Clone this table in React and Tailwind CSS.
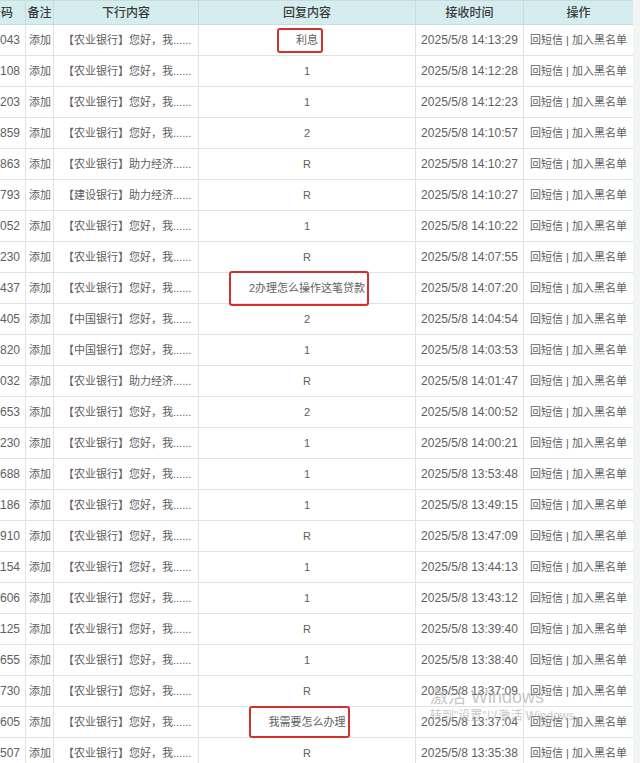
const rows = [
  ["1391043", "农业", "您好，我", "利息", "14:13:29"],
  ["1382108", "农业", "您好，我", "1", "14:12:28"],
  ["1375203", "农业", "您好，我", "1", "14:12:23"],
  ["1366859", "农业", "您好，我", "2", "14:10:57"],
  ["1358863", "农业", "助力经济", "R", "14:10:27"],
  ["1397793", "建设", "助力经济", "R", "14:10:27"],
  ["1380052", "农业", "您好，我", "1", "14:10:22"],
  ["1352230", "农业", "您好，我", "R", "14:07:55"],
  ["1384437", "农业", "您好，我", "2办理怎么操作这笔贷款", "14:07:20"],
  ["1371405", "中国", "您好，我", "2", "14:04:54"],
  ["1596820", "中国", "您好，我", "1", "14:03:53"],
  ["1580032", "农业", "助力经济", "R", "14:01:47"],
  ["1367653", "农业", "您好，我", "2", "14:00:52"],
  ["1352230", "农业", "您好，我", "1", "14:00:21"],
  ["1326688", "农业", "您好，我", "1", "13:53:48"],
  ["1381186", "农业", "您好，我", "1", "13:49:15"],
  ["1359910", "农业", "您好，我", "R", "13:47:09"],
  ["1381154", "农业", "您好，我", "1", "13:44:13"],
  ["1376606", "农业", "您好，我", "1", "13:43:12"],
  ["1391125", "农业", "您好，我", "R", "13:39:40"],
  ["1356655", "农业", "您好，我", "1", "13:38:40"],
  ["1387730", "农业", "您好，我", "R", "13:37:09"],
  ["1398605", "农业", "您好，我", "我需要怎么办理", "13:37:04"],
  ["1375507", "农业", "您好，我", "R", "13:35:38"],
];

// red annotation boxes drawn over the reply cell, keyed by row index
const marks = {
  0: "left-[78px] top-[3px] w-[46px] h-[25px]",
  8: "left-[30px] top-[-2px] w-[140px] h-[35px]",
  22: "left-[50px] top-[-1px] w-[101px] h-[32px]",
};

export default function App() {
  return (
    <div
      className="relative w-[640px] h-[763px] overflow-hidden bg-[#f3f5f5] text-[12px] text-[#606060]"
      style={{ fontFamily: '"Liberation Sans", "Noto Sans CJK SC", sans-serif' }}
    >
      <div className="w-[633px] overflow-hidden bg-white">
        <table className="ml-[-40px] w-[673px] table-fixed border-collapse">
          <colgroup>
            <col className="w-[65px]" />
            <col className="w-[28px]" />
            <col className="w-[145px]" />
            <col className="w-[217px]" />
            <col className="w-[108px]" />
            <col className="w-[110px]" />
          </colgroup>
          <thead>
            <tr className="h-[24px] bg-[#d5edef] text-[#3a3a3a]">
              <th className="border border-[#c9dcdd] pr-[12px] text-right font-medium">号码</th>
              <th className="border border-[#c9dcdd] font-medium">备注</th>
              <th className="border border-[#c9dcdd] font-medium">下行内容</th>
              <th className="border border-[#c9dcdd] font-medium">回复内容</th>
              <th className="border border-[#c9dcdd] font-medium">接收时间</th>
              <th className="border border-[#c9dcdd] font-medium">操作</th>
            </tr>
          </thead>
          <tbody>
            {rows.map((r, i) => (
              <tr key={i} className="h-[31px]">
                <td className="border border-[#dfe3e3] pr-[5px] text-right whitespace-nowrap overflow-hidden">{r[0]}</td>
                <td className="border border-[#dfe3e3] pl-[3px] text-[11px] whitespace-nowrap">添加</td>
                <td className="border border-[#dfe3e3] pl-[9px] text-[11px] whitespace-nowrap overflow-hidden">
                  【{r[1]}银行】{r[2]}......
                </td>
                <td className="relative border border-[#dfe3e3] text-center text-[11px] whitespace-nowrap">
                  {r[3]}
                  {marks[i] && (
                    <span className={`absolute rounded-[3px] border-2 border-[#d2312e] ${marks[i]}`} />
                  )}
                </td>
                <td className="border border-[#dfe3e3] text-center whitespace-nowrap">2025/5/8 {r[4]}</td>
                <td className="border border-[#dfe3e3] text-center text-[11px] whitespace-nowrap">回短信 | 加入黑名单</td>
              </tr>
            ))}
          </tbody>
        </table>
      </div>

      <div className="pointer-events-none absolute left-[430px] top-[686px] text-[#a0a0a0]/60">
        <div className="text-[18px] leading-[22px]">激活 Windows</div>
        <div className="text-[12px] leading-[16px]">转到"设置"以激活 Windows。</div>
      </div>
    </div>
  );
}
